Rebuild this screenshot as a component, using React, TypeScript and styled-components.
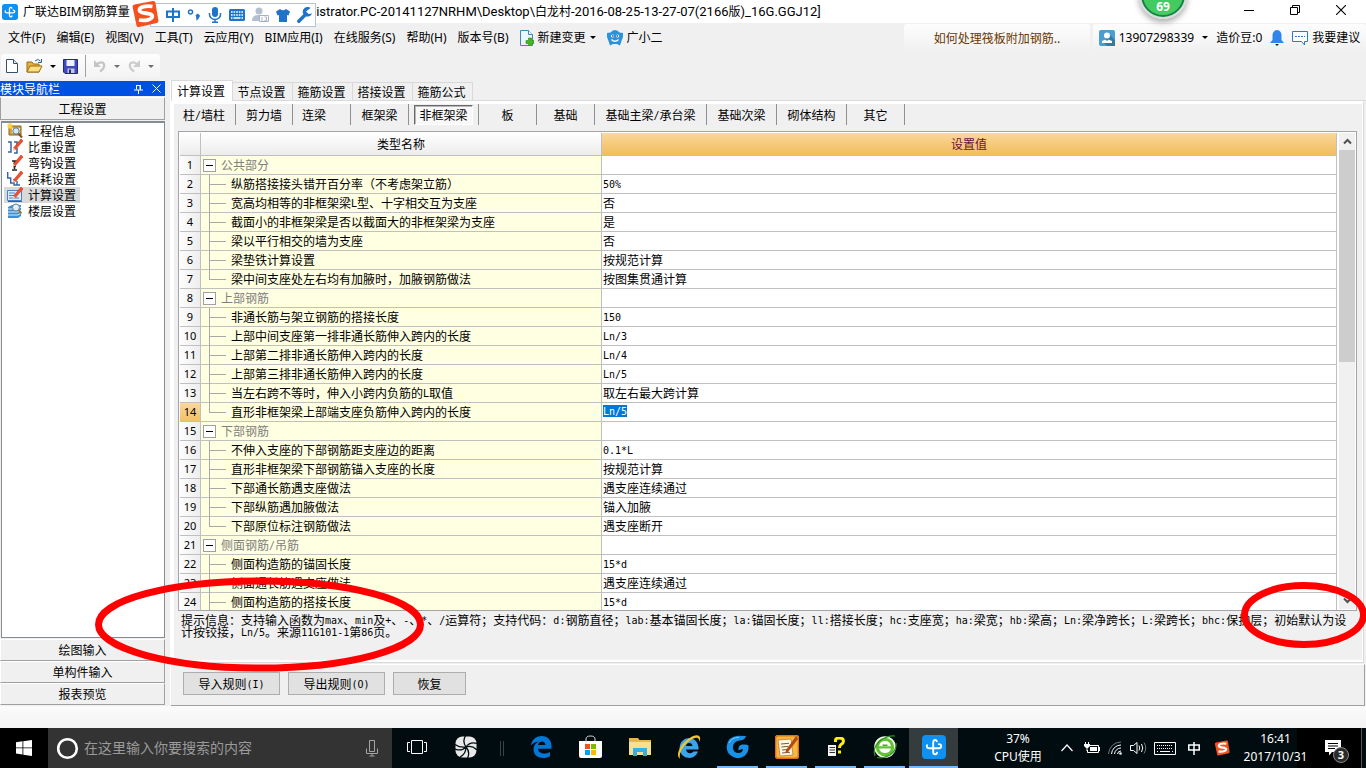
import React from 'react';
import styled, { createGlobalStyle, css } from 'styled-components';

const UI = '"Noto Sans", "Noto Sans CJK SC", sans-serif';
const SONG = '"Noto Sans CJK SC", sans-serif';
const FACE = '#f0f0f0';
const LINE = '#c0c0c0';
const BLUE = '#1f74c9';

const GlobalStyle = createGlobalStyle`
  *, *::before, *::after { box-sizing: border-box; }
  html, body { margin: 0; padding: 0; }
  body { font-family: ${UI}; font-size: 12px; line-height: 16px; color: #000; background: #fafafa; overflow: hidden; }
  button { font: inherit; color: inherit; margin: 0; padding: 0; border: 0; background: none; white-space: nowrap; }
  svg { display: block; flex: none; }
`;

/* ---------- text whose Latin runs use a face of their own ---------- */

const Fixed = styled.span`
  font-family: "DejaVu Sans Mono", monospace;
  font-size: 10px;
  line-height: 1px;
  vertical-align: 1px;
`;

const Wide = styled.span`
  font-family: Roboto, sans-serif;
  font-size: 13px;
  line-height: 1px;
`;

const splitLatin = (text: string, Latin: React.ElementType) =>
  text.split(/([\x20-\x7e]+)/).map((part, i) => (i % 2 ? <Latin key={i}>{part}</Latin> : part));

const Song = ({ children }: { children: string }) => <>{splitLatin(children, Fixed)}</>;

/* ---------- page frame ---------- */

const Desktop = styled.div`
  position: relative;
  display: flex;
  flex-direction: column;
  height: 100vh;
  overflow: hidden;
`;

const TitleBar = styled.header`
  display: flex;
  align-items: center;
  height: 23px;
  padding-left: 2px;
  background: #fff;
  white-space: nowrap;
`;

const TitleName = styled.span`
  flex: 0 0 291px;
  padding-left: 5px;
  overflow: hidden;
`;

const TitlePath = styled.span`
  flex: 1;
  overflow: hidden;
  line-height: 20px;
`;

const WindowButton = styled.button`
  display: flex;
  align-items: center;
  justify-content: center;
  width: 46px;
  height: 20px;
`;

const WindowButtons = styled.div`
  display: flex;
  align-self: flex-start;
  padding-right: 2px;
`;

const Ime = styled.div`
  position: absolute;
  left: 131px;
  top: 0;
  display: flex;
  z-index: 3;
`;

const ImeBar = styled.div`
  display: flex;
  align-items: center;
  gap: 7px;
  width: 166px;
  height: 24px;
  margin: 3px 0 0 -9px;
  padding: 0 3px 0 15px;
  border: 1px solid #b4c3d8;
  background: #fff;
  color: ${BLUE};
`;

const ImeLogo = styled.div`
  position: relative;
  z-index: 1;
`;

const Ball = styled.div`
  position: absolute;
  right: 179px;
  top: -29px;
  width: 48px;
  height: 48px;
  padding-top: 26px;
  border: 2px solid #d7dcd9;
  border-radius: 50%;
  background: linear-gradient(#39c95b, #48cb62);
  box-shadow: inset 0 0 0 2px #18804f, 0 3px 6px rgba(0, 0, 0, 0.35);
  color: #fff;
  font-size: 12px;
  font-weight: 700;
  line-height: 16px;
  text-align: center;
  z-index: 3;
`;

/* ---------- menu and toolbar ---------- */

const MenuBar = styled.nav`
  display: flex;
  align-items: center;
  height: 29px;
  padding-left: 8px;
  background: ${FACE};
  white-space: nowrap;
`;

const MenuList = styled.div`
  display: flex;
  flex: 1;
  align-items: center;
  gap: 11px;
`;

const MenuItem = styled.button`
  display: flex;
  align-items: center;
  gap: 4px;
  height: 22px;
`;

const MenuPanel = styled.div<{ $w: number }>`
  display: flex;
  align-items: center;
  justify-content: center;
  gap: 8px;
  width: ${(p) => p.$w}px;
  height: 28px;
  margin-left: 3px;
  border-radius: 3px 3px 0 0;
  background: linear-gradient(#fdfdfd, ${FACE});
`;

const PanelLink = styled.a`
  color: #6a3500;
  font-family: ${SONG};
  text-decoration: none;
`;

const ToolBar = styled.div`
  height: 28px;
  padding: 2px 0 2px 1px;
  background: ${FACE};
`;

const ToolStrip = styled.div`
  display: flex;
  align-items: center;
  gap: 7px;
  width: 159px;
  height: 24px;
  padding-left: 4px;
  border-radius: 3px;
  background: linear-gradient(#fdfdfd, #f3f3f3);
`;

const ToolDivider = styled.span`
  width: 1px;
  height: 22px;
  background: #a0a0a0;
`;

const Triangle = styled.span<{ $c?: string }>`
  width: 0;
  border: 3px solid transparent;
  border-top-color: ${(p) => p.$c || '#000'};
  border-bottom-width: 0;
`;

/* ---------- work area ---------- */

const Work = styled.main`
  display: flex;
  flex: 1;
  min-height: 0;
  background: ${FACE};
`;

const Side = styled.aside`
  display: flex;
  flex-direction: column;
  flex: 0 0 165px;
  margin: 1px 5px 1px 0;
  font-family: ${SONG};
`;

const SideTitle = styled.div`
  display: flex;
  align-items: center;
  gap: 9px;
  height: 15px;
  padding-right: 4px;
  background: #0050e4;
  color: #fff;
`;

const SideName = styled.h2`
  flex: 1;
  margin: 0;
  font-size: 12px;
  font-weight: 400;
  line-height: 14px;
`;

const SideButton = styled.button`
  height: 22px;
  border: 1px solid;
  border-color: #fff #a0a0a0 #a0a0a0 #fff;
  background: ${FACE};
  line-height: 18px;
`;

const SideHead = styled(SideButton)`
  height: 23px;
  margin: 1px 0;
  border-left-color: #a0a0a0;
`;

const SideList = styled.ul`
  flex: 1;
  margin: 0 0 1px 1px;
  padding: 0 2px;
  border: 1px solid #858b92;
  border-top-width: 2px;
  background: #fff;
  list-style: none;
`;

const SideItem = styled.li<{ $on?: boolean }>`
  display: flex;
  align-items: center;
  gap: 5px;
  width: 76px;
  height: 16px;
  padding-left: 3px;
  background: ${(p) => (p.$on ? '#d9d9d9' : 'transparent')};
`;

const Content = styled.section`
  display: flex;
  flex: 1;
  flex-direction: column;
  min-width: 0;
  border-left: 1px solid #fff;
  font-family: ${SONG};
`;

const Tabs = styled.div`
  display: flex;
  align-items: flex-end;
  height: 21px;
  border-bottom: 1px solid #d9d9d9;
`;

const Tab = styled.button<{ $on?: boolean }>`
  width: 60px;
  height: 18px;
  padding-right: 2px;
  border: 1px solid #d9d9d9;
  border-width: 1px 1px 0 0;
  line-height: 16px;
  ${(p) =>
    p.$on &&
    css`
      width: 62px;
      height: 21px;
      margin-bottom: -1px;
      border-left-width: 1px;
      background: #fff;
      line-height: 18px;
    `}
`;

const Page = styled.div`
  display: flex;
  flex: 1;
  flex-direction: column;
  min-height: 0;
  margin-right: 3px;
  padding: 0 5px 0 4px;
  border: 1px solid #fff;
  border-width: 3px 1px 2px 3px;
  box-shadow: 1px 1px 0 #d9d9d9;
`;

const SubTabs = styled.div`
  display: flex;
  height: 21px;
  margin-left: -4px;
  margin-bottom: 6px;
`;

const SubTab = styled.button<{ $w: number; $left?: boolean }>`
  width: ${(p) => p.$w}px;
  padding-left: ${(p) => (p.$left ? 9 : 0)}px;
  border-right: 1px solid #909090;
  line-height: 18px;
  text-align: ${(p) => (p.$left ? 'left' : 'center')};
`;

const Pressed = styled.span`
  display: block;
  height: 20px;
  margin: 0 5px;
  border: 1px solid;
  border-color: #696969 #fff #fff #696969;
  box-shadow: inset 1px 1px 0 #b8b8b8;
  background: #f8f8f8;
  line-height: 18px;
`;

const GridFrame = styled.div`
  display: flex;
  flex: 1;
  min-height: 0;
  border: 1px solid #a2a4aa;
  background: #fff;
`;

const GridView = styled.div`
  flex: 1;
  min-width: 0;
  margin: 1px 2px 0 1px;
  overflow: hidden;
`;

const Grid = styled.table`
  width: 100%;
  border-collapse: separate;
  border-spacing: 0;
  table-layout: fixed;
`;

const HeadCell = styled.th<{ $w?: number; $on?: boolean }>`
  width: ${(p) => (p.$w ? p.$w + 'px' : 'auto')};
  height: 23px;
  padding: 0;
  border: 1px solid ${LINE};
  border-width: 0 1px 1px 0;
  background: ${(p) =>
    p.$on ? 'linear-gradient(#fad79c, #f1bd5c)' : 'linear-gradient(#fff, #ececec)'};
  color: ${(p) => (p.$on ? '#6b0f3c' : '#000')};
  font-weight: 400;
`;

const cell = css`
  height: 19px;
  padding: 0;
  border: 1px solid ${LINE};
  border-width: 0 1px 1px 0;
  line-height: 18px;
  text-align: left;
  vertical-align: middle;
`;

const NumberCell = styled.th<{ $on?: boolean }>`
  ${cell}
  background: ${(p) => (p.$on ? 'linear-gradient(#fad79c, #f3c267)' : 'linear-gradient(90deg, #fdfdfd, #ededed)')};
  font-family: ${UI};
  font-size: 11px;
  font-weight: 400;
  text-align: center;
`;

const NameCell = styled.td`
  ${cell}
  background: #ffffe1;
`;

const ValueCell = styled.td`
  ${cell}
  padding-left: 1px;
  line-height: 16px;
`;

const Name = styled.div<{ $group?: boolean }>`
  display: flex;
  height: 18px;
  padding-left: 2px;
  color: ${(p) => (p.$group ? '#808080' : '#000')};
  white-space: nowrap;
`;

const Guide = styled.span<{ $last?: boolean }>`
  width: 17px;
  height: 19px;
  margin: 0 5px 0 6px;
  background:
    linear-gradient(#a8a8a8, #a8a8a8) 0 0 / 1px ${(p) => (p.$last ? '9px' : '19px')} no-repeat,
    linear-gradient(#a8a8a8, #a8a8a8) 0 9px / 17px 1px no-repeat;
`;

const Expander = styled.button`
  width: 13px;
  height: 13px;
  margin: 3px 5px 0 0;
  border: 1px solid #a0a0a0;
  background: linear-gradient(#000, #000) center / 7px 1px no-repeat #fff;
`;

const Selection = styled.div`
  width: fit-content;
  height: 12px;
  margin-bottom: 2px;
  background: #0078d7;
  color: #fff;
  line-height: 12px;
`;

const ScrollBar = styled.div`
  display: flex;
  flex-direction: column;
  width: 16px;
  margin: 1px 1px 1px 0;
  background: ${FACE};
`;

const ScrollButton = styled.button`
  display: flex;
  align-items: center;
  justify-content: center;
  height: 17px;
`;

const ScrollTrack = styled.div`
  flex: 1;
`;

const ScrollThumb = styled.div`
  height: 48%;
  background: #cdcdcd;
`;

const Hint = styled.p`
  flex: 0 0 49px;
  margin: 0;
  padding: 3px 7px 0 3px;
  line-height: 12px;
  word-break: break-all;
`;

const Actions = styled.div`
  display: flex;
  gap: 8px;
  height: 42px;
  margin: 2px 1px 0 0;
  padding: 7px 12px;
  border: 1px solid;
  border-color: #fff #a0a0a0 #a0a0a0 #fff;
  border-left-width: 0;
`;

const Action = styled.button<{ $w: number }>`
  width: ${(p) => p.$w}px;
  height: 23px;
  border: 1px solid #adadad;
  background: #e1e1e1;
  line-height: 20px;
`;

const Gap = styled.div`
  height: 22px;
  background: linear-gradient(#fbfbfb, #f3f3f3);
`;

/* ---------- taskbar ---------- */

const TaskBar = styled.footer`
  display: flex;
  height: 40px;
  background: #000c0f;
  color: #fff;
`;

const Start = styled.button`
  display: flex;
  align-items: center;
  justify-content: center;
  width: 48px;
  background: #000;
`;

const Search = styled.label`
  display: flex;
  align-items: center;
  width: 344px;
  padding: 0 14px 0 8px;
  background: #333;
`;

const SearchInput = styled.input`
  flex: 1;
  min-width: 0;
  margin: 0;
  padding: 0 5px;
  border: 0;
  background: none;
  color: #fff;
  font: 14px/20px ${UI};
  &::placeholder { color: #9a9a9a; opacity: 1; }
`;

const Task = styled.button<{ $open?: boolean; $on?: boolean }>`
  display: flex;
  align-items: center;
  justify-content: center;
  width: 49px;
  height: 40px;
  border-bottom: 2px solid transparent;
  ${(p) => p.$on && 'background: #343c3e;'}
  ${(p) =>
    p.$open &&
    css`
      width: ${p.$on ? 49 : 41}px;
      margin: 0 ${p.$on ? 0 : 4}px;
      border-color: #76b9f7;
    `}
`;

const TaskGrip = styled.span`
  width: 4px;
  height: 15px;
  margin: 13px 13px 0 10px;
  border: 1px solid #3b4345;
  border-width: 0 1px;
`;

const Tray = styled.div`
  display: flex;
  align-items: center;
  margin-left: auto;
`;

const TrayText = styled.div<{ $w: number }>`
  width: ${(p) => p.$w}px;
  height: 40px;
  padding: 2px 0;
  line-height: 18px;
  text-align: center;
  white-space: nowrap;
`;

const Clock = styled(TrayText)`
  background: linear-gradient(90deg, transparent 60px, #000 60px);
`;

const TrayIcon = styled.button<{ $w: number }>`
  display: flex;
  align-items: center;
  justify-content: center;
  width: ${(p) => p.$w}px;
  height: 40px;
`;

const Notices = styled.button`
  display: flex;
  align-items: center;
  justify-content: center;
  width: 48px;
  height: 40px;
  margin-right: 4px;
  padding-right: 9px;
  border-right: 1px solid #555;
  background: #000;
`;

const NoticeIcon = styled.span`
  position: relative;
`;

const Badge = styled.span`
  position: absolute;
  left: 8px;
  top: 7px;
  width: 16px;
  height: 16px;
  border: 1px solid #888;
  border-radius: 50%;
  background: #2b2b2b;
  font-size: 11px;
  font-weight: 700;
  line-height: 14px;
  text-align: center;
`;

/* ---------- red pen marks over the window ---------- */

const Mark = styled.svg<{ $side: 'left' | 'right'; $x: number; $bottom: number }>`
  position: absolute;
  ${(p) => p.$side}: ${(p) => p.$x}px;
  bottom: ${(p) => p.$bottom}px;
  z-index: 4;
  pointer-events: none;
`;

/* ---------- drawings ---------- */

const AppIcon = ({ size }: { size: number }) => (
  <svg width={size} height={size} viewBox="0 0 24 24">
    <rect width="24" height="24" rx="4" fill="#0d92f4" />
    <path d="M14.800 6.300Q14.300 4.800 12.800 5q-1.600.300-1.600 2.500V17q0 2.300 2 2.300 1.600 0 1.800-1.500M5 10.300Q4.300 13.300 7.500 13.300H16.500q2.700 0 2.700-2.100t-2.500-2.100" fill="none" stroke="#fff" strokeWidth="1.900" strokeLinecap="round" />
  </svg>
);

const Sogou = ({ size }: { size: number }) => (
  <svg width={size} height={size} viewBox="0 0 28 28">
    <path d="M3.500 4.500 22 1q2-.3 2.400 1.500l3 18q.2 2-1.500 2.500L8 27q-2 .4-2.500-1.500L1.700 7.500Q1.200 5 3.500 4.500z" fill="#f4511e" />
    <path d="M21.500 6.500C16 5.500 8 6.500 8.500 10.500c.5 4 12.500 1.500 12.800 5.500.2 3.500-7 5.300-13.300 4" fill="none" stroke="#fff" strokeWidth="3.800" />
  </svg>
);

const Pencil = () => (
  <g>
    <path d="M14 0 16 2 8.500 10.500 6.500 9z" fill="#f0512f" stroke="#c93018" strokeWidth=".6" />
    <path d="M6.500 9l2 1.500L5.500 12z" fill="#f2cfa4" />
  </g>
);

const sideIcons: Record<string, React.ReactNode> = {
  info: (
    <>
      <path d="M2 3h12v9H2z" fill="#d8a640" stroke="#8a6018" />
      <path d="M5 5h8v5H5z" fill="#fff3cc" />
      <path d="M0 3h6M3 0v6M1 1l4 4M5 1 1 5" stroke="#ffd23a" strokeWidth="1.200" />
      <circle cx="9" cy="8" r="3.200" fill="#d7e9f5" stroke="#55758c" />
      <path d="m11.500 10.500 3.500 4" stroke="#8a4c20" strokeWidth="2" />
    </>
  ),
  ratio: (
    <>
      <path d="M1 3h3v10H1M7 3h3v3M10 9v5H7" fill="none" stroke="#3565a8" strokeWidth="1.500" />
      <Pencil />
    </>
  ),
  hook: (
    <>
      <path d="M5 6h5M7.500 6v8M5 15h5M6 11h3" fill="none" stroke="#222" strokeWidth="1.600" />
      <Pencil />
    </>
  ),
  loss: (
    <>
      <path d="M.700 1v6h3v5h3.500M7 8v6h6M10 10v4" fill="none" stroke="#3565a8" strokeWidth="1.400" />
      <Pencil />
    </>
  ),
  calc: (
    <>
      <path d="M.5 3.500h14v10H.5z" fill="#dcebfa" stroke="#4c82c4" />
      <path d="M2 6h6M2 8.500h5M2 11h10" stroke="#4c82c4" />
      <path d="M1 14.500h14" stroke="#2d5fa0" />
      <Pencil />
    </>
  ),
  floor: (
    <>
      <path d="M1 4l4-2h9v11l-3 2H1z" fill="#3f8fd0" />
      <path d="M1 6h10l3-2M1 9h10l3-2M1 12h10l3-2" stroke="#d9efff" fill="none" />
      <circle cx="9" cy="4.500" r="3.500" fill="#e2eef5" stroke="#6a8494" />
      <path d="m11.500 7 3 3.500" stroke="#9b6a30" strokeWidth="1.800" />
    </>
  ),
};

const Mic = ({ c, w, h }: { c: string; w: number; h: number }) => (
  <svg width={w} height={h} viewBox="0 0 14 16">
    <rect x="4" y="0" width="6" height="10" rx="3" fill={c} />
    <path d="M1.500 6v1.500a5.500 5 0 0 0 11 0V6M7 12.500V15M4 15.300h6" fill="none" stroke={c} strokeWidth="1.500" />
  </svg>
);

const Keyboard = ({ c }: { c: string }) => (
  <svg width="22" height="13" viewBox="0 0 22 13">
    <path d="M.5.500h21v12H.5z" fill="none" stroke={c} />
    <path d="M3 3.500h16M3 6.500h16" stroke={c} strokeDasharray="1 1" />
    <path d="M6 9.500h10M3 9.500h1M18 9.500h1" stroke={c} />
  </svg>
);

const ImeKeyboard = () => (
  <svg width="16" height="12" viewBox="0 0 16 12">
    <rect width="16" height="12" rx="1.500" fill={BLUE} />
    <path d="M2 3h12M2 6h12" stroke="#fff" strokeWidth="1.600" strokeDasharray="1.600 1" />
    <path d="M4.500 9h7M2 9h1.500M12.500 9H14" stroke="#fff" strokeWidth="1.400" />
  </svg>
);

const ZhongGlyph = ({ c }: { c: string }) => (
  <svg width="14" height="14" viewBox="0 0 14 14">
    <path d="M1 3.500h12v5.500H1zM7 0v14" fill="none" stroke={c} strokeWidth="2" />
  </svg>
);

/* ---------- data ---------- */

type Row = { name: string; value?: string; group?: boolean; last?: boolean; on?: boolean };

const rows: Row[] = [
  { name: '公共部分', group: true },
  { name: '纵筋搭接接头错开百分率（不考虑架立筋）', value: '50%' },
  { name: '宽高均相等的非框架梁L型、十字相交互为支座', value: '否' },
  { name: '截面小的非框架梁是否以截面大的非框架梁为支座', value: '是' },
  { name: '梁以平行相交的墙为支座', value: '否' },
  { name: '梁垫铁计算设置', value: '按规范计算' },
  { name: '梁中间支座处左右均有加腋时，加腋钢筋做法', value: '按图集贯通计算', last: true },
  { name: '上部钢筋', group: true },
  { name: '非通长筋与架立钢筋的搭接长度', value: '150' },
  { name: '上部中间支座第一排非通长筋伸入跨内的长度', value: 'Ln/3' },
  { name: '上部第二排非通长筋伸入跨内的长度', value: 'Ln/4' },
  { name: '上部第三排非通长筋伸入跨内的长度', value: 'Ln/5' },
  { name: '当左右跨不等时，伸入小跨内负筋的L取值', value: '取左右最大跨计算' },
  { name: '直形非框架梁上部端支座负筋伸入跨内的长度', value: 'Ln/5', last: true, on: true },
  { name: '下部钢筋', group: true },
  { name: '不伸入支座的下部钢筋距支座边的距离', value: '0.1*L' },
  { name: '直形非框架梁下部钢筋锚入支座的长度', value: '按规范计算' },
  { name: '下部通长筋遇支座做法', value: '遇支座连续通过' },
  { name: '下部纵筋遇加腋做法', value: '锚入加腋' },
  { name: '下部原位标注钢筋做法', value: '遇支座断开', last: true },
  { name: '侧面钢筋/吊筋', group: true },
  { name: '侧面构造筋的锚固长度', value: '15*d' },
  { name: '侧面通长筋遇支座做法', value: '遇支座连续通过' },
  { name: '侧面构造筋的搭接长度', value: '15*d' },
];

const subTabs: { t: string; w: number; left?: boolean; on?: boolean }[] = [
  { t: '柱/墙柱', w: 62, left: true },
  { t: '剪力墙', w: 57 },
  { t: '连梁', w: 58, left: true },
  { t: '框架梁', w: 58 },
  { t: '非框架梁', w: 70, on: true },
  { t: '板', w: 58 },
  { t: '基础', w: 58 },
  { t: '基础主梁/承台梁', w: 112 },
  { t: '基础次梁', w: 70 },
  { t: '砌体结构', w: 70 },
  { t: '其它', w: 58 },
];

const menus = ['文件(F)', '编辑(E)', '视图(V)', '工具(T)', '云应用(Y)', 'BIM应用(I)', '在线服务(S)', '帮助(H)', '版本号(B)'];
const tabs = ['计算设置', '节点设置', '箍筋设置', '搭接设置', '箍筋公式'];
const modules = [
  ['info', '工程信息'],
  ['ratio', '比重设置'],
  ['hook', '弯钩设置'],
  ['loss', '损耗设置'],
  ['calc', '计算设置'],
  ['floor', '楼层设置'],
];

const path = 'nistrator.PC-20141127NRHM\\Desktop\\白龙村-2016-08-25-13-27-07(2166版)_16G.GGJ12]';

const hint =
  '提示信息：支持输入函数为max、min及+、-、*、/运算符；支持代码：d:钢筋直径；lab:基本锚固长度；la:锚固长度；ll:搭接长度；hc:支座宽；ha:梁宽；hb:梁高；Ln:梁净跨长；L:梁跨长；bhc:保护层；初始默认为设计按铰接，Ln/5。来源11G101-1第86页。';

/* ---------- sections ---------- */

const ImeToolbar = () => (
  <Ime>
    <ImeLogo><Sogou size={28} /></ImeLogo>
    <ImeBar>
      <ZhongGlyph c={BLUE} />
      <svg width="14" height="14" viewBox="0 0 14 14">
        <circle cx="3.500" cy="4" r="2" fill="none" stroke={BLUE} strokeWidth="1.500" />
        <path d="M9 8a1.700 1.700 0 1 1 2.800 1.300Q11.500 11 9.500 12" fill={BLUE} stroke={BLUE} />
      </svg>
      <Mic c={BLUE} w={14} h={16} />
      <ImeKeyboard />
      <svg width="17" height="16" viewBox="0 0 17 16">
        <circle cx="7" cy="4" r="3.500" fill="#b4bfd2" />
        <path d="M0 14c0-5 3-6 7-6s4 1 5 2v4z" fill="#b4bfd2" />
        <path d="M7.500 8.500h9v6h-9z" fill="#fff" stroke="#a5b1c6" />
        <path d="M10 10v4M12.500 10h2v3.500h-2" fill="none" stroke="#a5b1c6" />
      </svg>
      <svg width="14" height="14" viewBox="0 0 14 14">
        <path d="M4 1q3 2.500 6 0l4 2.500-1.500 4L11 7v7H3V7l-1.500.5L0 3.500z" fill={BLUE} />
      </svg>
      <svg width="16" height="16" viewBox="0 0 16 16">
        <path d="M1.800 14.200 9 7" stroke={BLUE} strokeWidth="3.400" strokeLinecap="round" />
        <path d="M13.500 1A4.800 4.800 0 1 0 15 6.500L11.500 7 9 4.500z" fill={BLUE} />
      </svg>
    </ImeBar>
  </Ime>
);

const Title = () => (
  <TitleBar>
    <AppIcon size={16} />
    <TitleName>广联达BIM钢筋算量</TitleName>
    <TitlePath>{splitLatin(path, Wide)}</TitlePath>
    <WindowButtons>
      <WindowButton aria-label="最小化">
        <svg width="10" height="10" viewBox="0 0 10 10"><path d="M0 5.500h10" stroke="#000" /></svg>
      </WindowButton>
      <WindowButton aria-label="还原">
        <svg width="10" height="10" viewBox="0 0 10 10"><path d="M.5 2.500h7v7h-7zM2.500 2.500v-2h7v7h-2" fill="none" stroke="#000" /></svg>
      </WindowButton>
      <WindowButton aria-label="关闭">
        <svg width="10" height="10" viewBox="0 0 10 10"><path d="m0 0 10 10M10 0 0 10" stroke="#000" strokeWidth="1.100" /></svg>
      </WindowButton>
    </WindowButtons>
  </TitleBar>
);

const Menu = () => (
  <MenuBar>
    <MenuList>
      {menus.map((m) => <MenuItem key={m}>{m}</MenuItem>)}
      <MenuItem>
        <svg width="14" height="16" viewBox="0 0 14 16">
          <path d="M.5.500h8l4 4v11H.5z" fill="#eaf6fc" stroke="#3f87b5" />
          <path d="M8.500.500v4h4" fill="#fff" stroke="#3f87b5" />
          <path d="M8.500 8h3v2.500H14v3h-2.500V16h-3v-2.500H6v-3h2.500z" fill="#45b520" stroke="#2b8a10" strokeWidth=".6" />
        </svg>
        新建变更
        <Triangle />
      </MenuItem>
      <MenuItem>
        <svg width="16" height="16" viewBox="0 0 16 16">
          <path d="M8 0q3 0 4.500 2.500L16 3v4l-1.500 4L13 15.500l-3-1.500H6l-3 1.500L1.500 11 0 7V3l3.500-.5Q5 0 8 0z" fill="#2a93dd" />
          <circle cx="5.500" cy="6" r="1.600" fill="#fff" /><circle cx="10.500" cy="6" r="1.600" fill="#fff" />
          <circle cx="5.800" cy="6" r=".8" fill="#123" /><circle cx="10.200" cy="6" r=".8" fill="#123" />
          <path d="M4.500 9.500q3.500 3.500 7 0" fill="none" stroke="#fff" strokeWidth="1.300" />
        </svg>
        广小二
      </MenuItem>
    </MenuList>
    <MenuPanel $w={186}>
      <PanelLink href="#faq">如何处理筏板附加钢筋..</PanelLink>
    </MenuPanel>
    <MenuPanel $w={273}>
      <MenuItem>
        <svg width="16" height="16" viewBox="0 0 16 16">
          <rect width="16" height="16" rx="2" fill="#4a9fd0" />
          <path d="m10 4 6 6v6H8l-4-4z" fill="#2f7cab" />
          <circle cx="8" cy="5.500" r="3" fill="#fff" />
          <path d="M3 13V11l3.500-1.500L8 11l1.500-1.500L13 11v2z" fill="#fff" />
        </svg>
        13907298339
      </MenuItem>
      <Triangle />
      <MenuItem>造价豆:0</MenuItem>
      <MenuItem aria-label="消息">
        <svg width="14" height="16" viewBox="0 0 14 16">
          <path d="M7 0q4.500.5 4.500 5.500V10L14 13H0l2.500-3V5.500Q2.500.500 7 0z" fill="#2f86ea" />
          <path d="M5 14h4l-2 2z" fill="#222" />
        </svg>
      </MenuItem>
      <MenuItem>
        <svg width="16" height="16" viewBox="0 0 16 16">
          <path d="M.5 1.500h15v10h-3v3.500l-3-3.500h-9z" fill="#fff" stroke="#2f74d8" />
          <path d="M3 6.500h10" stroke="#2f74d8" strokeDasharray="2 1" />
        </svg>
        我要建议
      </MenuItem>
    </MenuPanel>
  </MenuBar>
);

const Tools = () => (
  <ToolBar>
    <ToolStrip>
      <button aria-label="新建">
        <svg width="14" height="14" viewBox="0 0 14 14">
          <path d="M1.500.500h7l4 4v9h-11z" fill="#fff" stroke="#32506e" />
          <path d="M8.500.500v4h4" fill="#d5e3ee" stroke="#32506e" />
        </svg>
      </button>
      <button aria-label="打开">
        <svg width="17" height="16" viewBox="0 0 17 16">
          <path d="M1 14V4h5l1.500 2H13v8z" fill="#e5b13e" stroke="#9a6d10" />
          <path d="M1 14 4 8h12l-3 6z" fill="#ffdf80" stroke="#9a6d10" />
          <path d="M9 3q3-3 5.500 0M15.500 1v3.500H12" fill="none" stroke="#35648f" />
        </svg>
      </button>
      <Triangle />
      <button aria-label="保存">
        <svg width="15" height="15" viewBox="0 0 15 15">
          <path d="M.5.500h14v14H2l-1.500-1.500z" fill="#3f48c0" stroke="#23297d" />
          <path d="M3.500 1h8v6h-8z" fill="#eef0fb" />
          <path d="M4.500 9.500h7V14h-7z" fill="#c4c9d8" />
          <path d="M6 10.500h2V14H6z" fill="#23297d" />
        </svg>
      </button>
      <ToolDivider />
      <button aria-label="撤销">
        <svg width="14" height="14" viewBox="0 0 14 14">
          <path d="M3 5.500Q9 1.500 11 5q1.200 4-4 7.500" fill="none" stroke="#c4c4c4" strokeWidth="2.200" />
          <path d="M1 1v7h7z" fill="#c4c4c4" />
        </svg>
      </button>
      <Triangle $c="#6e6e6e" />
      <button aria-label="重做">
        <svg width="14" height="14" viewBox="0 0 14 14">
          <path d="M11 5.500Q5 1.500 3 5q-1.200 4 4 7.500" fill="none" stroke="#cbcbcb" strokeWidth="2.200" />
          <path d="M13 1v7H6z" fill="#cbcbcb" />
        </svg>
      </button>
      <Triangle $c="#6e6e6e" />
    </ToolStrip>
  </ToolBar>
);

const Sidebar = () => (
  <Side>
    <SideTitle>
      <SideName>模块导航栏</SideName>
      <button aria-label="固定">
        <svg width="9" height="10" viewBox="0 0 9 10"><path d="M2.500 1v4.500M6 1v4.500M2 1.500h5M0 6h9M4.500 6v4" fill="none" stroke="#fff" /><path d="M6 1h1v5H6z" fill="#fff" /></svg>
      </button>
      <button aria-label="关闭导航栏">
        <svg width="9" height="9" viewBox="0 0 9 9"><path d="m.5.500 8 8M8.500.500l-8 8" stroke="#fff" /></svg>
      </button>
    </SideTitle>
    <SideHead>工程设置</SideHead>
    <SideList>
      {modules.map(([icon, text]) => (
        <SideItem key={icon} $on={icon === 'calc'}>
          <svg width="16" height="16" viewBox="0 0 16 16">{sideIcons[icon]}</svg>
          {text}
        </SideItem>
      ))}
    </SideList>
    <SideButton>绘图输入</SideButton>
    <SideButton>单构件输入</SideButton>
    <SideButton>报表预览</SideButton>
  </Side>
);

const Chevron = ({ down }: { down?: boolean }) => (
  <svg width="9" height="7" viewBox="0 0 9 7">
    <path d={down ? 'M1 1.500l3.500 3.500L8 1.500' : 'M1 5.500 4.500 2 8 5.500'} fill="none" stroke="#505050" strokeWidth="2" />
  </svg>
);

const Settings = () => (
  <Content>
    <Tabs role="tablist">
      {tabs.map((t, i) => <Tab key={t} role="tab" aria-selected={i === 0} $on={i === 0}>{t}</Tab>)}
    </Tabs>
    <Page>
      <SubTabs>
        {subTabs.map((s) => (
          <SubTab key={s.t} $w={s.w} $left={s.left}>
            {s.on ? <Pressed>{s.t}</Pressed> : <Song>{s.t}</Song>}
          </SubTab>
        ))}
      </SubTabs>
      <GridFrame>
        <GridView>
          <Grid>
            <thead>
              <tr>
                <HeadCell $w={21} />
                <HeadCell $w={401}>类型名称</HeadCell>
                <HeadCell $on>设置值</HeadCell>
              </tr>
            </thead>
            <tbody>
              {rows.map((r, i) => (
                <tr key={i}>
                  <NumberCell $on={r.on}>{i + 1}</NumberCell>
                  <NameCell>
                    <Name $group={r.group}>
                      {r.group ? <Expander aria-label="折叠" /> : <Guide $last={r.last} />}
                      <span><Song>{r.name}</Song></span>
                    </Name>
                  </NameCell>
                  <ValueCell>
                    {r.on ? <Selection><Song>{r.value || ''}</Song></Selection> : <Song>{r.value || ''}</Song>}
                  </ValueCell>
                </tr>
              ))}
            </tbody>
          </Grid>
        </GridView>
        <ScrollBar>
          <ScrollButton aria-label="向上滚动"><Chevron /></ScrollButton>
          <ScrollTrack><ScrollThumb /></ScrollTrack>
          <ScrollButton aria-label="向下滚动"><Chevron down /></ScrollButton>
        </ScrollBar>
      </GridFrame>
      <Hint><Song>{hint}</Song></Hint>
    </Page>
    <Actions>
      <Action $w={97}><Song>导入规则(I)</Song></Action>
      <Action $w={97}><Song>导出规则(O)</Song></Action>
      <Action $w={73}>恢复</Action>
    </Actions>
  </Content>
);

const Taskbar = () => (
  <TaskBar>
    <Start aria-label="开始">
      <svg width="16" height="16" viewBox="0 0 16 16"><path d="M0 2.200 6.500 1.300v6.200H0zM7.300 1.200 16 0v7.500H7.300zM0 8.300h6.500v6.200L0 13.600zM7.300 8.300H16V16l-8.700-1.200z" fill="#fff" /></svg>
    </Start>
    <Search>
      <svg width="23" height="23" viewBox="0 0 23 23"><circle cx="11.500" cy="11.500" r="9.300" fill="none" stroke="#fff" strokeWidth="2.600" /></svg>
      <SearchInput placeholder="在这里输入你要搜索的内容" aria-label="搜索" />
      <svg width="12" height="17" viewBox="0 0 12 17"><path d="M3.500.500h5v11h-5zM.5 8.500v5h11v-5M6 13.500v2.500M3.500 16h5" fill="none" stroke="#a5a5a5" /></svg>
    </Search>
    <Task aria-label="任务视图">
      <svg width="20" height="14" viewBox="0 0 20 14"><path d="M4.500.500h11v13h-11zM3 2.500H.500v9H3M17 2.500h2.500v9H17" fill="none" stroke="#fff" /></svg>
    </Task>
    <Task aria-label="风车">
      <svg width="22" height="22" viewBox="0 0 22 22">
        <rect x=".5" y=".5" width="21" height="21" rx="7" fill="#e9e9e9" />
        <path d="M10.500 0Q7 5 11 11M22 7.500Q15 5.500 11 11M22 14q-5-5-11-3M12.500 22q3-6-1.500-11M5 21q6-3 6-10M0 13q7 2.500 11-2M0 8.500q5 3.500 11 2.500" fill="none" stroke="#000c0f" strokeWidth="1.300" />
      </svg>
    </Task>
    <TaskGrip />
    <Task aria-label="Edge">
      <svg width="21" height="22" viewBox="0 0 21 22"><path d="M0 9.500C.5 4 5 0 10.500 0 17 0 20.500 4.500 20.500 10v2.800H7c.3 5 7 6 12 3.200v4.200c-6 3.500-16.500 2-16.500-7 0-3.500 2-6.200 5-7.500C4.500 6 1.500 7 0 9.500zM7 9h7.500c0-4.500-6.500-5-7.500 0z" fill="#0078d7" /></svg>
    </Task>
    <Task aria-label="应用商店">
      <svg width="23" height="24" viewBox="0 0 23 24">
        <path d="M0 6h23v15q0 2-2 2H2q-2 0-2-2z" fill="#fff" />
        <path d="M7 9V4q0-3 4.500-3T16 4v2" fill="none" stroke="#d8d8d8" />
        <path d="M6 9h5v5H6z" fill="#f25022" /><path d="M12 9h5v5h-5z" fill="#7fba00" />
        <path d="M6 15h5v5H6z" fill="#00a4ef" /><path d="M12 15h5v5h-5z" fill="#ffb900" />
      </svg>
    </Task>
    <Task aria-label="文件资源管理器">
      <svg width="22" height="18" viewBox="0 0 22 18">
        <path d="M0 0h9l1.500 2H22v15H0z" fill="#e8b64c" /><path d="M0 4h22v13H0z" fill="#fbe08c" />
        <path d="M4 18v-8h14v8h-4v-4H8v4z" fill="#35aee2" />
      </svg>
    </Task>
    <Task aria-label="Internet Explorer">
      <svg width="24" height="24" viewBox="0 0 24 24">
        <path d="M2.500 13a9.500 9.500 0 0 1 19-1v2.500H9q.8 3.800 4 3.800 2.500 0 3.500-1.800H21Q18.500 23 12.500 23 3 22.500 2.500 13zM9 11h6.500Q15 8 12.300 8T9 11z" fill="#3aa5ea" />
        <path d="M3 23.500C-2 21 3 9 12 3.500 17 0 22-1 23 2.500q.5 2-.7 4.500Q22.500 2 18 3C10 5 1 17 3 23.500z" fill="#f5c62c" />
      </svg>
    </Task>
    <Task $open aria-label="云助手">
      <svg width="24" height="24" viewBox="0 0 24 24">
        <path d="M20 1q-1 4-6 4.500C9 6 6.500 9.500 7 13.500q1 4.500 5.500 4.500 4 0 4.500-4-3 0-4.500 1.500Q12 10 16.500 9.500q4.500-.5 6 1 .5 7-4 10.500-6 4-12 .5Q0 18 .8 11 2 1.500 12 .8 16 .8 20 1z" fill="#1991e8" />
        <path d="M3 8Q6 2 13 2.500" stroke="#6fd0fa" fill="none" />
      </svg>
    </Task>
    <Task $open aria-label="记事">
      <svg width="24" height="24" viewBox="0 0 24 24">
        <rect width="24" height="24" rx="3" fill="#ffb640" /><rect x=".7" y=".7" width="22.600" height="22.600" rx="2.500" fill="none" stroke="#e0720c" strokeWidth="1.400" />
        <path d="M3 5l13-1 2 16-13 1z" fill="#fff8e0" stroke="#9a5d18" strokeWidth=".6" />
        <path d="M6 9l8-.7M6.500 12l7-.7M7 15l6-.6M7 18l8-.7" stroke="#7a5a38" />
        <path d="M21 1 11 15l-.5 3L13 17 23 4z" fill="#b34a12" />
      </svg>
    </Task>
    <Task $open aria-label="加密锁">
      <svg width="18" height="20" viewBox="0 0 18 20">
        <path d="M1 8h8v11H1z" fill="#f3f3f3" /><path d="M2.500 10.500H8M2.500 13H8M2.500 15.500H8" stroke="#333" />
        <path d="M8.500 5V3q0-2 4-2t4 3q0 2-2.500 3.500-1.500 1-1.500 3.500" fill="none" stroke="#fff200" strokeWidth="3" /><path d="M11 13.500h3v3h-3z" fill="#fff200" />
      </svg>
    </Task>
    <Task $open aria-label="浏览器">
      <svg width="24" height="24" viewBox="0 0 24 24">
        <circle cx="12" cy="12" r="10" fill="#62c234" stroke="#f0fbe8" strokeWidth="1.600" />
        <path d="M6 11.200Q7 6 12 6t6 5.200z" fill="#fff" /><path d="M6 13.500h12Q16.500 18 12 18t-6-4.500z" fill="#fff" /><path d="M9.500 9.500h5v1.500h-5z" fill="#4ba324" />
        <path d="M2 21Q-1 12 8 5q8-5 14-4M23 8q1 7-6 12-8 4-13 2.500" fill="none" stroke="#2f8f25" strokeWidth="1.200" />
      </svg>
    </Task>
    <Task $open $on aria-label="广联达"><AppIcon size={24} /></Task>
    <Tray>
      <TrayText $w={72}>37%<br />CPU使用</TrayText>
      <TrayIcon $w={26} aria-label="显示隐藏的图标">
        <svg width="12" height="8" viewBox="0 0 12 8"><path d="m.5 7 5.500-6 5.500 6" fill="none" stroke="#fff" strokeWidth="1.200" /></svg>
      </TrayIcon>
      <TrayIcon $w={23} aria-label="电源">
        <svg width="16" height="12" viewBox="0 0 16 12">
          <path d="M4.500 3.500h10v7H3.500V8" fill="none" stroke="#fff" /><path d="M6 5h7v4H6zM15 5h1v4h-1z" fill="#fff" />
          <path d="M0 2h6v2L4 6H2L0 4zM1 0h1v2H1zM4 0h1v2H4zM2.500 6h1v3h-1z" fill="#fff" />
        </svg>
      </TrayIcon>
      <TrayIcon $w={24} aria-label="网络">
        <svg width="14" height="14" viewBox="0 0 14 14">
          <path d="M.5 13A12.500 12.500 0 0 1 13 1" fill="none" stroke="#777" />
          <path d="M3.500 13A9.500 9.500 0 0 1 13 4M6.500 13A6.500 6.500 0 0 1 13 7M9.500 13a3.500 3.500 0 0 1 3.500-3" fill="none" stroke="#fff" /><circle cx="12.500" cy="12.500" r="1.300" fill="#fff" />
        </svg>
      </TrayIcon>
      <TrayIcon $w={22} aria-label="音量">
        <svg width="17" height="14" viewBox="0 0 17 14">
          <path d="M.5 4.500h3L7 1.500v11l-3.500-3h-3z" fill="none" stroke="#fff" />
          <path d="M9 4.500q1.500 2.500 0 5M11.500 3q2.500 4 0 8" fill="none" stroke="#fff" /><path d="M14 1.500q3.500 5.500 0 11" fill="none" stroke="#777" />
        </svg>
      </TrayIcon>
      <TrayIcon $w={32} aria-label="触摸键盘"><Keyboard c="#fff" /></TrayIcon>
      <TrayIcon $w={26} aria-label="输入法"><svg width="12" height="13" viewBox="0 0 12 13"><path d="M.8 3h10.400v5H.8zM6 0v13" fill="none" stroke="#fff" strokeWidth="1.500" /></svg></TrayIcon>
      <TrayIcon $w={30} aria-label="搜狗输入法"><Sogou size={16} /></TrayIcon>
      <Clock $w={77}>16:41<br />2017/10/31</Clock>
      <Notices aria-label="通知">
        <NoticeIcon>
          <svg width="16" height="16" viewBox="0 0 16 16"><path d="M0 0h16v12H7l-3 3.500V12H0z" fill="#fff" /><path d="M3 3.500h10M3 6h10M3 8.500h7" stroke="#000" /></svg>
          <Badge>3</Badge>
        </NoticeIcon>
      </Notices>
    </Tray>
  </TaskBar>
);

export default function App() {
  return (
    <Desktop>
      <GlobalStyle />
      <Title />
      <Menu />
      <Tools />
      <Work>
        <Sidebar />
        <Settings />
      </Work>
      <Gap />
      <Taskbar />
      <ImeToolbar />
      <Ball>69</Ball>
      <Mark $side="left" $x={95} $bottom={96} width="329" height="95" viewBox="0 0 329 95">
        <ellipse cx="164.500" cy="47.500" rx="161" ry="43.500" fill="none" stroke="#f00" strokeWidth="7" />
      </Mark>
      <Mark $side="right" $x={-1} $bottom={120} width="126" height="66" viewBox="0 0 126 66">
        <ellipse cx="63" cy="33" rx="59.500" ry="29.500" fill="none" stroke="#f00" strokeWidth="7" />
      </Mark>
    </Desktop>
  );
}
